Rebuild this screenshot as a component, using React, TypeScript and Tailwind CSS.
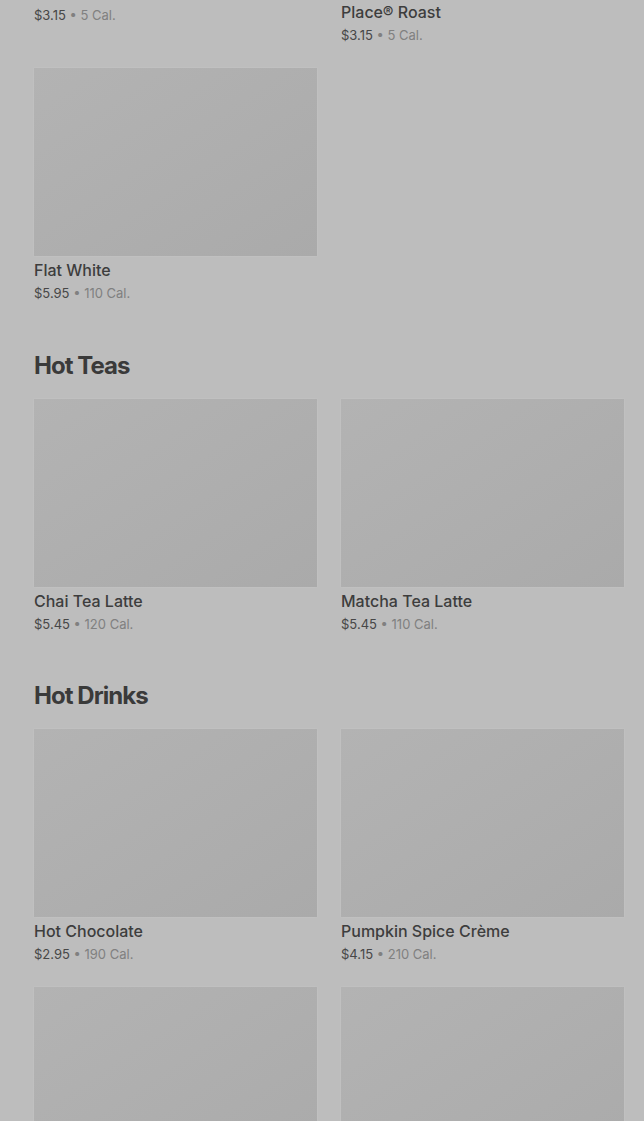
import React from "react";

type Item = { name: React.ReactNode; price: string; cal: string };

const sections: { title?: string; items: Item[] }[] = [
  {
    items: [
      { name: "Pike Place® Roast", price: "$3.15", cal: "5 Cal." },
      {
        name: (
          <>
            <span className="block">Decaf Pike</span>
            <span className="block">Place® Roast</span>
          </>
        ),
        price: "$3.15",
        cal: "5 Cal.",
      },
      { name: "Flat White", price: "$5.95", cal: "110 Cal." },
    ],
  },
  {
    title: "Hot Teas",
    items: [
      { name: "Chai Tea Latte", price: "$5.45", cal: "120 Cal." },
      { name: "Matcha Tea Latte", price: "$5.45", cal: "110 Cal." },
    ],
  },
  {
    title: "Hot Drinks",
    items: [
      { name: "Hot Chocolate", price: "$2.95", cal: "190 Cal." },
      { name: "Pumpkin Spice Crème", price: "$4.15", cal: "210 Cal." },
      { name: "Steamed Milk", price: "$2.75", cal: "180 Cal." },
      { name: "Vanilla Crème", price: "$3.95", cal: "200 Cal." },
    ],
  },
];

function Card({ item }: { item: Item }) {
  return (
    <div>
      <div className="h-[188px] bg-gradient-to-br from-[#b3b3b3] to-[#aaaaaa] shadow-[0_0_2px_rgba(255,255,255,0.15)]" />
      <div className="mt-1 text-base leading-5 font-medium text-[#3d3d3d]">{item.name}</div>
      <div className="mt-[4px] text-[13px] leading-[18px] text-[#474747]">
        {item.price}
        <span className="text-[#808080]"> • {item.cal}</span>
      </div>
    </div>
  );
}

export default function App() {
  return (
    <div
      className="h-[1121px] w-[644px] overflow-hidden bg-[#bdbdbd]"
      style={{ fontFamily: "Inter, 'Noto Sans', sans-serif" }}
    >
      <div className="-mt-[210px] pl-[34px] pr-[20px]">
        {sections.map((s, i) => (
          <div key={i} className={i > 0 ? "mt-[48.5px]" : ""}>
            {s.title && (
              <h2 className="mb-[18px] text-2xl leading-[30px] font-bold tracking-[-0.04em] text-[#3a3a3a]">
                {s.title}
              </h2>
            )}
            <div className="grid grid-cols-2 gap-x-6 gap-y-6">
              {s.items.map((it, j) => (
                <Card key={j} item={it} />
              ))}
            </div>
          </div>
        ))}
      </div>
    </div>
  );
}
